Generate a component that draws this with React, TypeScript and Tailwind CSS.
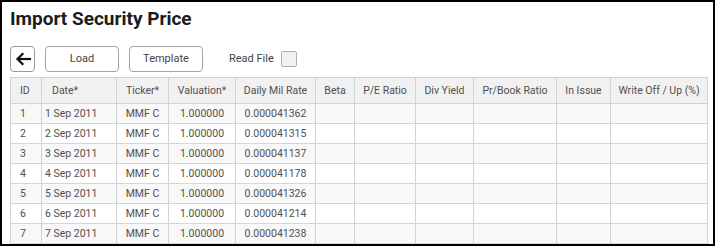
const columns = [
  { key: "id", label: "ID", width: "w-[31px]", head: "justify-start pl-[9px]", cell: "justify-start pl-[9px]" },
  { key: "date", label: "Date*", width: "w-[75px]", head: "justify-start pl-[10px]", cell: "justify-start pl-[3px]" },
  { key: "ticker", label: "Ticker*", width: "w-[52px]", head: "justify-center", cell: "justify-center" },
  { key: "valuation", label: "Valuation*", width: "w-[67px]", head: "justify-center", cell: "justify-center" },
  { key: "rate", label: "Daily Mil Rate", width: "w-[80px]", head: "justify-center", cell: "justify-center" },
  { key: "beta", label: "Beta", width: "w-[39px]", head: "justify-center", cell: "justify-center" },
  { key: "pe", label: "P/E Ratio", width: "w-[61px]", head: "justify-center", cell: "justify-center" },
  { key: "div", label: "Div Yield", width: "w-[58px]", head: "justify-center", cell: "justify-center" },
  { key: "pb", label: "Pr/Book Ratio", width: "w-[83px]", head: "justify-center", cell: "justify-center" },
  { key: "issue", label: "In Issue", width: "w-[54px]", head: "justify-center", cell: "justify-center" },
  { key: "write", label: "Write Off / Up (%)", width: "w-[96px]", head: "justify-center", cell: "justify-center" },
];

const rates = ["0.000041362", "0.000041315", "0.000041137", "0.000041178", "0.000041326", "0.000041214", "0.000041238"];

const rows = rates.map((rate, i) => ({
  id: String(i + 1),
  date: `${i + 1} Sep 2011`,
  ticker: "MMF C",
  valuation: "1.000000",
  rate,
  beta: "",
  pe: "",
  div: "",
  pb: "",
  issue: "",
  write: "",
}));

function BackArrow() {
  return (
    <svg width="16" height="14" viewBox="0 0 16 14" fill="none" stroke="#111" strokeWidth="2.2" strokeLinecap="square">
      <line x1="3" y1="7" x2="15" y2="7" />
      <polyline points="7.5,2 2.5,7 7.5,12" fill="none" strokeLinejoin="miter" />
    </svg>
  );
}

export default function App() {
  return (
    <div className="w-[715px] h-[246px] overflow-hidden border-2 border-black bg-white font-['Roboto',sans-serif]">
      <h1 className="pl-[8px] pt-[6px] text-[19px] leading-[22px] font-bold text-[#1c1c1c]">Import Security Price</h1>

      <div className="mt-[16px] ml-[8px] flex items-center h-[26px]">
        <button className="w-[25px] h-[26px] flex items-center justify-center rounded-[4px] border border-[#9a9a9a] bg-white">
          <BackArrow />
        </button>
        <button className="ml-[10px] w-[74px] h-[26px] rounded-[4px] border border-[#a3a3a3] bg-white text-[11px] text-[#444]">
          Load
        </button>
        <button className="ml-[10px] w-[74px] h-[26px] rounded-[4px] border border-[#a3a3a3] bg-white text-[11px] text-[#444]">
          Template
        </button>
        <span className="ml-[26px] text-[11px] text-[#444]">Read File</span>
        <span className="ml-[7px] w-[16px] h-[16px] rounded-[2px] border border-[#b0b0b0] bg-[#f1f1f1]" />
      </div>

      <div className="mt-[5px] ml-[8px] w-[698px] border-l border-t border-r border-[#d2d2d2] text-[10.5px] text-[#505050]">
        <div className="flex h-[26px] bg-[#f1f1f1] border-b border-[#d2d2d2]">
          {columns.map((c, ci) => (
            <div
              key={c.key}
              className={`${c.width} ${c.head} flex items-center whitespace-nowrap ${ci < columns.length - 1 ? "border-r border-[#d2d2d2]" : ""}`}
            >
              {c.label}
            </div>
          ))}
        </div>
        {rows.map((r, ri) => (
          <div
            key={r.id}
            className={`flex h-[20px] border-b border-[#d6d6d6] ${ri % 2 === 0 ? "bg-[#f8f8f8]" : "bg-white"}`}
          >
            {columns.map((c, ci) => (
              <div
                key={c.key}
                className={`${c.width} ${c.cell} flex items-center whitespace-nowrap ${ci < columns.length - 1 ? "border-r border-[#d2d2d2]" : ""}`}
              >
                {r[c.key as keyof typeof r]}
              </div>
            ))}
          </div>
        ))}
      </div>
    </div>
  );
}
